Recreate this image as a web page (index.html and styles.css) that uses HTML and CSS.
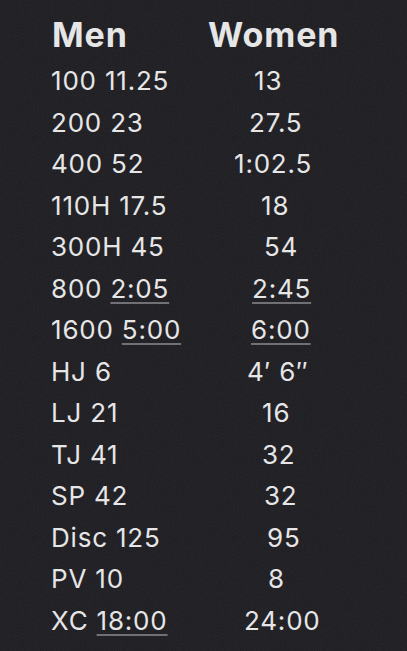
FILE: index.html
```html
<!DOCTYPE html>
<html lang="en">
<head>
<meta charset="utf-8">
<title>Standards</title>
<link rel="stylesheet" href="styles.css">
</head>
<body>
<main class="note">
  <div class="head">
    <span class="h-men">Men</span>
    <span class="h-women">Women</span>
  </div>
  <div class="rows">
    <div class="m">100 11.25</div><div class="w i45">13</div>
    <div class="m">200 23</div><div class="w i40">27.5</div>
    <div class="m">400 52</div><div class="w i25">1:02.5</div>
    <div class="m">110H 17.5</div><div class="w i52">18</div>
    <div class="m">300H 45</div><div class="w i55">54</div>
    <div class="m">800 <span class="u">2:05</span></div><div class="w i43"><span class="u">2:45</span></div>
    <div class="m">1600 <span class="u">5:00</span></div><div class="w i42"><span class="u">6:00</span></div>
    <div class="m">HJ 6</div><div class="w i38">4′ 6″</div>
    <div class="m">LJ 21</div><div class="w i53">16</div>
    <div class="m">TJ 41</div><div class="w i53">32</div>
    <div class="m">SP 42</div><div class="w i55">32</div>
    <div class="m">Disc 125</div><div class="w i58">95</div>
    <div class="m">PV 10</div><div class="w i59">8</div>
    <div class="m">XC <span class="u">18:00</span></div><div class="w i35">24:00</div>
  </div>
</main>
</body>
</html>
```
FILE: styles.css
```css
html, body {
  margin: 0;
  padding: 0;
}
body {
  width: 407px;
  height: 651px;
  overflow: hidden;
  background-color: #1c1b20;
  background-image: url("data:image/svg+xml;utf8,<svg xmlns='http://www.w3.org/2000/svg' width='200' height='200'><filter id='n'><feTurbulence type='fractalNoise' baseFrequency='0.9' numOctaves='2' stitchTiles='stitch'/><feColorMatrix values='0 0 0 0 1  0 0 0 0 1  0 0 0 0 1  0 0 0 0.06 0'/></filter><rect width='200' height='200' filter='url(%23n)'/></svg>");
  color: #e6e6e7;
  font-family: Inter, "Noto Sans", "Liberation Sans", sans-serif;
}
.note {
  padding: 15px 0 0 51px;
}
.head {
  display: grid;
  grid-template-columns: 157px auto;
  height: 40px;
  line-height: 40px;
  font-size: 34px;
  font-weight: 700;
  letter-spacing: 0.9px;
  margin-bottom: 5px;
}
.h-men {
  padding-left: 1px;
}
.rows {
  display: grid;
  grid-template-columns: 158px auto;
  grid-auto-rows: 41.5px;
  line-height: 41.5px;
  font-size: 26px;
  font-weight: 400;
  letter-spacing: 0.8px;
}
.u {
  text-decoration: underline;
  text-decoration-color: #717075;
  text-decoration-thickness: 2px;
  text-underline-offset: 4px;
}
.i25 { padding-left: 25px; }
.i35 { padding-left: 35px; }
.i38 { padding-left: 38px; }
.i40 { padding-left: 40px; }
.i42 { padding-left: 42px; }
.i43 { padding-left: 43px; }
.i45 { padding-left: 45px; }
.i52 { padding-left: 52px; }
.i53 { padding-left: 53px; }
.i55 { padding-left: 55px; }
.i58 { padding-left: 58px; }
.i59 { padding-left: 59px; }
```
